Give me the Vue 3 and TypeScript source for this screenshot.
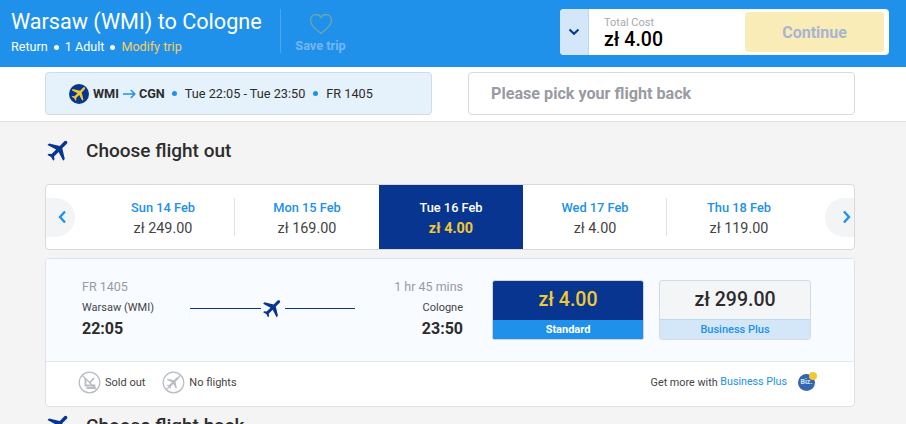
<script setup lang="ts">
const planePath =
  'M21 16v-2l-8-5V3.5c0-.83-.67-1.5-1.5-1.5S10 2.67 10 3.5V9l-8 5v2l8-2.5V19l-2 1.5V22l3.5-1 3.5 1v-1.5L13 19v-5.5l8 2.5z'

interface DateItem {
  label: string
  price: string
  active?: boolean
}

const dates: DateItem[] = [
  { label: 'Sun 14 Feb', price: 'zł 249.00' },
  { label: 'Mon 15 Feb', price: 'zł 169.00' },
  { label: 'Tue 16 Feb', price: 'zł 4.00', active: true },
  { label: 'Wed 17 Feb', price: 'zł 4.00' },
  { label: 'Thu 18 Feb', price: 'zł 119.00' },
]
</script>

<template>
  <div class="page">
    <header class="topbar">
      <div class="trip">
        <h1>Warsaw (WMI) to Cologne</h1>
        <p>
          <span>Return</span><i class="dot"></i><span>1 Adult</span><i class="dot"></i>
          <a>Modify trip</a>
        </p>
      </div>
      <div class="save">
        <svg width="24" height="22" viewBox="0 0 24 22">
          <path
            d="M12 20.5C5 14.8 1.5 11.6 1.5 7.2 1.5 4 4 1.5 7 1.5c2 0 3.900 1 5 2.900 1.100-1.900 3-2.900 5-2.900 3 0 5.500 2.500 5.500 5.700 0 4.400-3.500 7.600-10.500 13.300z"
            fill="none"
            stroke="#6ea7a8"
            stroke-width="1.300"
          />
        </svg>
        <span>Save trip</span>
      </div>
      <div class="cost">
        <div class="toggle">
          <svg width="12" height="8" viewBox="0 0 12 8">
            <path d="M1.500 1.500 6 5.800l4.500-4.300" fill="none" stroke="#073590" stroke-width="2" />
          </svg>
        </div>
        <div class="total">
          <small>Total Cost</small>
          <strong>zł 4.00</strong>
        </div>
        <button class="continue">Continue</button>
      </div>
    </header>

    <section class="picked">
      <div class="picked-box out">
        <span class="badge">
          <svg width="19" height="19" viewBox="0 0 24 24">
            <path :d="planePath" fill="#f1c933" transform="rotate(45 12 12)" />
          </svg>
        </span>
        <b>WMI</b>
        <svg class="arrow" width="13" height="10" viewBox="0 0 13 10">
          <path d="M0 5h11.500M7.800 1l4 4-4 4" fill="none" stroke="#2091eb" stroke-width="1.500" />
        </svg>
        <b>CGN</b>
        <i class="dot blue first"></i>
        <span>Tue 22:05 - Tue 23:50</span>
        <i class="dot blue"></i>
        <span>FR 1405</span>
      </div>
      <div class="picked-box back">Please pick your flight back</div>
    </section>

    <main class="content">
      <h2 class="heading">
        <svg width="28" height="28" viewBox="0 0 24 24">
          <path :d="planePath" fill="#073590" transform="rotate(45 12 12)" />
        </svg>
        Choose flight out
      </h2>

      <div class="carousel">
        <button class="nav prev">
          <svg width="9" height="14" viewBox="0 0 9 14">
            <path d="M7 1.500 2 7l5 5.500" fill="none" stroke="#2091eb" stroke-width="2.400" />
          </svg>
        </button>
        <div class="dates">
          <div v-for="d in dates" :key="d.label" class="date" :class="{ active: d.active }">
            <b>{{ d.label }}</b>
            <span>{{ d.price }}</span>
          </div>
        </div>
        <button class="nav next">
          <svg width="9" height="14" viewBox="0 0 9 14">
            <path d="M2 1.500 7 7l-5 5.500" fill="none" stroke="#2091eb" stroke-width="2.400" />
          </svg>
        </button>
      </div>

      <div class="card">
        <div class="card-top">
          <div class="route">
            <div class="end">
              <span class="muted">FR 1405</span>
              <span class="city">Warsaw (WMI)</span>
              <b>22:05</b>
            </div>
            <div class="line">
              <svg width="24" height="24" viewBox="0 0 24 24">
                <path :d="planePath" fill="#073590" transform="rotate(45 12 12)" />
              </svg>
            </div>
            <div class="end right">
              <span class="muted">1 hr 45 mins</span>
              <span class="city">Cologne</span>
              <b>23:50</b>
            </div>
          </div>
          <div class="fare standard">
            <div class="amount">zł 4.00</div>
            <div class="name">Standard</div>
          </div>
          <div class="fare plus">
            <div class="amount">zł 299.00</div>
            <div class="name">Business Plus</div>
          </div>
        </div>
        <div class="card-foot">
          <div class="legend">
            <svg width="23" height="23" viewBox="0 0 23 23">
              <circle cx="11.500" cy="11.500" r="10.300" fill="none" stroke="#b9bcc2" stroke-width="1.200" />
              <path d="M4.500 4.500l14 14" stroke="#b9bcc2" stroke-width="1.200" />
              <path d="M7.500 7v7.500h9v2.500h-8" fill="none" stroke="#b9bcc2" stroke-width="1.800" />
              <path d="M16 7l-4.500 5" stroke="#b9bcc2" stroke-width="1.800" />
            </svg>
            <span>Sold out</span>
          </div>
          <div class="legend">
            <svg width="23" height="23" viewBox="0 0 23 23">
              <circle cx="11.500" cy="11.500" r="10.300" fill="none" stroke="#b9bcc2" stroke-width="1.200" />
              <path d="M4.500 18.500l14-14" stroke="#b9bcc2" stroke-width="1.200" />
              <g transform="translate(3.500 3.500) scale(.67)">
                <path :d="planePath" fill="#b9bcc2" transform="rotate(45 12 12)" />
              </g>
            </svg>
            <span>No flights</span>
          </div>
          <div class="upsell">
            Get more with <a>Business Plus</a>
            <span class="biz">Biz.<i></i></span>
          </div>
        </div>
      </div>

      <h2 class="heading second">
        <svg width="28" height="28" viewBox="0 0 24 24">
          <path :d="planePath" fill="#073590" transform="rotate(45 12 12)" />
        </svg>
        Choose flight back
      </h2>
    </main>
  </div>
</template>

<style>
html,
body {
  margin: 0;
  overflow: hidden;
  background: #f4f4f4;
}
</style>

<style scoped>
.page {
  font-family: Roboto, "Liberation Sans", sans-serif;
  color: #2c2c2c;
  height: 424px;
  overflow: hidden;
}

.topbar {
  display: flex;
  height: 67px;
  box-sizing: border-box;
  background: #2091eb;
  padding: 9px 17px 0 11px;
  color: #fff;
}

.trip {
  width: 269px;
}

.trip h1 {
  margin: -1px 0 0;
  font-size: 21.6px;
  line-height: 28px;
  font-weight: 400;
  white-space: nowrap;
}

.trip p {
  display: flex;
  align-items: center;
  margin: 3px 0 0;
  font-size: 12.6px;
  line-height: 16px;
}

.trip a {
  color: #f5cf5c;
}

.dot {
  display: block;
  width: 5px;
  height: 5px;
  margin: 0 6px;
  border-radius: 50%;
  background: #fff;
}

.save {
  display: flex;
  flex-direction: column;
  align-items: center;
  box-sizing: border-box;
  width: 80px;
  height: 44px;
  padding-top: 4px;
  border-left: 1px solid #4ba6ef;
  font-size: 12.7px;
  font-weight: 700;
  color: #74b6f2;
}

.save span {
  margin-top: 4px;
  line-height: 14px;
}

.cost {
  display: flex;
  margin-left: auto;
  width: 329px;
  height: 46px;
  background: #fff;
  border-radius: 4px;
  overflow: hidden;
}

.toggle {
  display: flex;
  align-items: center;
  justify-content: center;
  width: 29px;
  background: #d3e7f9;
  border-right: 1px solid #b9d9f5;
  box-sizing: border-box;
}

.total {
  display: flex;
  flex-direction: column;
  width: 156px;
  padding: 7px 0 0 15px;
  box-sizing: border-box;
}

.total small {
  font-size: 11px;
  line-height: 13px;
  color: #a7a9ae;
}

.total strong {
  font-size: 19.5px;
  line-height: 22px;
  font-weight: 500;
  color: #000;
}

.continue {
  align-self: center;
  width: 139px;
  height: 40px;
  padding: 0;
  border: 0;
  border-radius: 4px;
  background: #f9ecb7;
  color: #a9b5d0;
  font: 700 16px Roboto, sans-serif;
}

.picked {
  display: flex;
  justify-content: space-between;
  height: 55px;
  box-sizing: border-box;
  padding: 5px 51px 0 45px;
  background: #fff;
  border-bottom: 1px solid #e0e0e0;
}

.picked-box {
  display: flex;
  align-items: center;
  box-sizing: border-box;
  width: 387px;
  height: 43px;
  border: 1px solid #d5dbe5;
  border-radius: 4px;
}

.out {
  padding: 0 0 0 23px;
  background: #e5f2fc;
  font-size: 12.7px;
}

.out b {
  font-weight: 700;
}

.badge {
  display: flex;
  align-items: center;
  justify-content: center;
  width: 20px;
  height: 20px;
  margin-right: 4px;
  border-radius: 50%;
  background: #073590;
}

.arrow {
  margin: 0 3px 0 4px;
}

.dot.blue {
  margin: 0 8px;
  background: #2091eb;
}

.dot.blue.first {
  margin-left: 7px;
}

.back {
  padding-left: 22px;
  font-size: 16.15px;
  font-weight: 700;
  color: #9a9aa3;
}

.content {
  padding: 0 51px 0 45px;
}

.heading {
  display: flex;
  align-items: center;
  gap: 13px;
  height: 28px;
  margin: 14px 0 0;
  font-size: 19px;
  font-weight: 500;
}

.carousel {
  display: flex;
  align-items: center;
  box-sizing: border-box;
  height: 66px;
  margin-top: 20px;
  background: #fff;
  border: 1px solid #d9d9d9;
  border-radius: 4px;
}

.nav {
  display: flex;
  align-items: center;
  justify-content: center;
  flex: none;
  box-sizing: border-box;
  width: 29px;
  height: 39px;
  padding: 0;
  border: 0;
  background: #f2f4f6;
}

.prev {
  border-radius: 0 20px 20px 0;
  padding-left: 4px;
}

.next {
  border-radius: 20px 0 0 20px;
  justify-content: flex-end;
  padding-right: 3px;
}

.dates {
  display: flex;
  height: 100%;
  margin: 0 14px 0 16px;
}

.date {
  position: relative;
  display: flex;
  flex-direction: column;
  align-items: center;
  box-sizing: border-box;
  width: 144px;
  padding-top: 14px;
  font-size: 14.4px;
  line-height: 17px;
}

.date b {
  font-size: 12.8px;
  font-weight: 500;
  color: #2091eb;
}

.date span {
  margin-top: 4px;
  color: #444;
}

.date + .date:not(.active)::before {
  content: "";
  position: absolute;
  left: -1px;
  top: 13px;
  height: 38px;
  width: 1px;
  background: #e3e3e3;
}

.date.active + .date::before {
  display: none;
}

.date.active {
  background: #073590;
}

.date.active b {
  color: #fff;
}

.date.active span {
  color: #f1c933;
  font-weight: 700;
}

.card {
  margin-top: 8px;
  height: 149px;
  box-sizing: border-box;
  background: #fff;
  border: 1px solid #dfe2e8;
  border-radius: 4px;
  overflow: hidden;
}

.card-top {
  display: flex;
  height: 103px;
  box-sizing: border-box;
  padding: 20px 0 0 36px;
  background: #f8fbff;
  border-bottom: 1px solid #e3e7ee;
}

.route {
  display: flex;
  width: 382px;
  margin-right: 28px;
}

.end {
  display: flex;
  flex-direction: column;
  width: 108px;
}

.end.right {
  align-items: flex-end;
}

.muted {
  font-size: 12.5px;
  line-height: 15px;
  color: #9a9aa3;
}

.city {
  margin-top: 6px;
  font-size: 11px;
  line-height: 16px;
  color: #444;
}

.end b {
  margin-top: 3px;
  font-size: 16px;
  line-height: 20px;
  font-weight: 700;
}

.line {
  display: flex;
  align-items: center;
  justify-content: center;
  position: relative;
  width: 165px;
  height: 16px;
  margin-top: 21px;
}

.line::before {
  content: "";
  position: absolute;
  left: 0;
  right: 0;
  top: 8px;
  height: 1px;
  background: #073590;
}

.line svg {
  position: relative;
  background: #f8fbff;
  flex: none;
}

.fare {
  display: flex;
  flex-direction: column;
  box-sizing: border-box;
  width: 152px;
  height: 60px;
  margin-top: 1px;
  border-radius: 3px;
  overflow: hidden;
  text-align: center;
}

.fare .amount {
  flex: 1;
  font-size: 19.5px;
  font-weight: 500;
  line-height: 38px;
}

.fare .name {
  height: 19px;
  font-size: 11px;
  line-height: 19px;
}

.standard {
  background: #073590;
  border: 1px solid #cdd3df;
  color: #f1c933;
}

.standard .name {
  background: #2091eb;
  color: #fff;
  font-weight: 700;
}

.plus {
  margin-left: 15px;
  background: #f4f5f7;
  border: 1px solid #d5dbe5;
}

.plus .name {
  background: #d3e7f9;
  border-top: 1px solid #b9d9f5;
  color: #2091eb;
  font-weight: 500;
}

.card-foot {
  display: flex;
  align-items: center;
  box-sizing: border-box;
  height: 44px;
  padding: 0 39px 4px 32px;
  font-size: 11px;
  color: #444;
}

.legend {
  display: flex;
  align-items: center;
  gap: 4px;
  margin-right: 17px;
}

.upsell {
  display: flex;
  align-items: center;
  margin-left: auto;
  font-size: 10.8px;
  white-space: pre;
}

.upsell a {
  color: #2091eb;
  font-size: 10.7px;
  margin-top: -1px;
}

.biz {
  position: relative;
  width: 17px;
  height: 17px;
  margin-left: 11px;
  border-radius: 50%;
  background: #3565b0;
  color: #d3e7f9;
  font-size: 7px;
  font-weight: 700;
  line-height: 17px;
  text-align: center;
}

.biz i {
  position: absolute;
  top: -2px;
  right: -2px;
  width: 8px;
  height: 8px;
  border-radius: 50%;
  background: #f1c933;
}

.second {
  margin-top: 4px;
}
</style>
